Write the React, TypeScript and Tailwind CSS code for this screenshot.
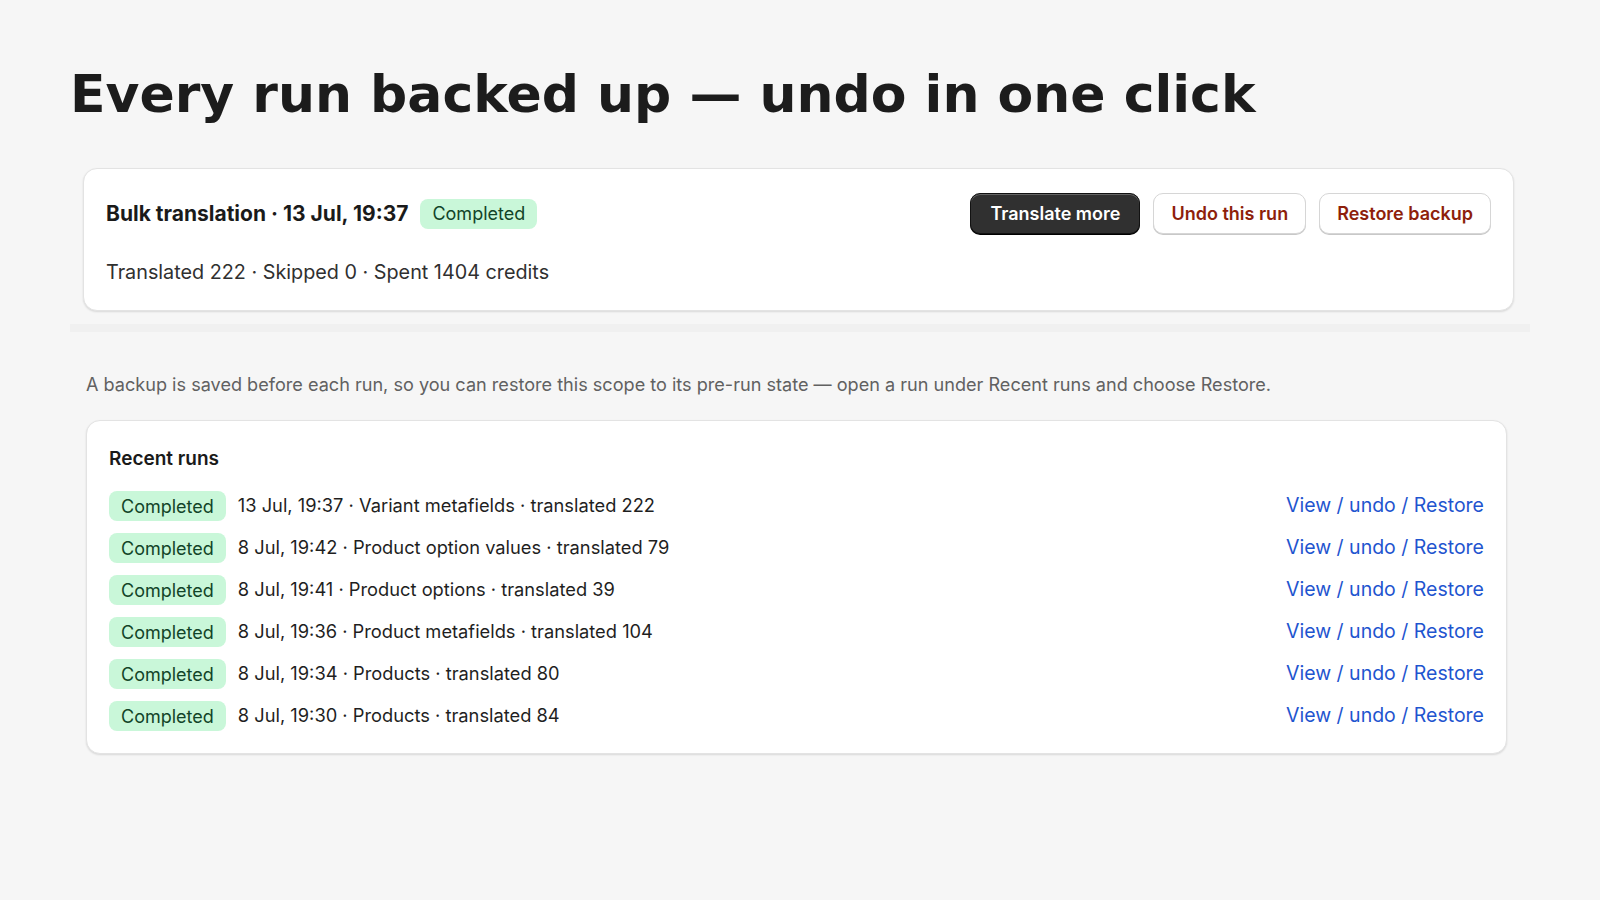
const runs = [
  { when: "13 Jul, 19:37", scope: "Variant metafields", count: 222 },
  { when: "8 Jul, 19:42", scope: "Product option values", count: 79 },
  { when: "8 Jul, 19:41", scope: "Product options", count: 39 },
  { when: "8 Jul, 19:36", scope: "Product metafields", count: 104 },
  { when: "8 Jul, 19:34", scope: "Products", count: 80 },
  { when: "8 Jul, 19:30", scope: "Products", count: 84 },
];

function Badge() {
  return (
    <span className="inline-flex h-[30px] items-center rounded-lg bg-[#c9f7d9] px-3 text-[18px] text-[#124428]">
      Completed
    </span>
  );
}

function OutlineButton({ children }: { children: React.ReactNode }) {
  return (
    <button
      type="button"
      className="h-[41px] rounded-[10px] border border-[#d6d6d6] bg-white px-[17px] text-[18px] font-semibold text-[#8e1f0b] shadow-[0_1px_0_#c8c8c8]"
    >
      {children}
    </button>
  );
}

export default function App() {
  return (
    <div className="min-h-[900px] bg-[#f6f6f6] px-[70px] pb-10 pt-[66px] font-['Inter','Noto_Sans',sans-serif] text-[#303030]">
      <h1 className="font-['DejaVu_Sans',sans-serif] text-[52px] font-bold leading-[56px] text-[#1c1c1c]">
        Every run backed up — undo in one click
      </h1>

      <section className="ml-[13px] mr-4 mt-[46px] rounded-[14px] border border-[#e3e3e3] bg-white px-[22px] py-6 shadow-[0_1px_2px_rgba(0,0,0,0.12)]">
        <div className="flex h-[41px] items-center">
          <h2 className="text-[21px] font-bold text-[#1a1a1a]">Bulk translation · 13 Jul, 19:37</h2>
          <span className="ml-3">
            <Badge />
          </span>
          <div className="ml-auto flex gap-[13px]">
            <button
              type="button"
              className="h-[41px] rounded-[10px] border border-[#121212] bg-[#303030] px-[19px] text-[18px] font-semibold text-white shadow-[inset_0_1px_0_rgba(255,255,255,0.25),0_1px_0_#000]"
            >
              Translate more
            </button>
            <OutlineButton>Undo this run</OutlineButton>
            <OutlineButton>Restore backup</OutlineButton>
          </div>
        </div>
        <p className="mt-[25px] text-[19.8px] leading-[27px]">Translated 222 · Skipped 0 · Spent 1404 credits</p>
      </section>

      <div className="mt-[13px] h-2 bg-[#f0f0f0]" />

      <p className="mx-4 mt-[40px] text-[18.1px] leading-6 text-[#616161]">
        A backup is saved before each run, so you can restore this scope to its pre-run state — open a run under Recent
        runs and choose Restore.
      </p>

      <section className="ml-4 mr-[23px] mt-6 rounded-[14px] border border-[#e3e3e3] bg-white px-[22px] pb-[22px] pt-[24px] shadow-[0_1px_2px_rgba(0,0,0,0.12)]">
        <h3 className="text-[19px] font-semibold leading-[28px] text-[#1a1a1a]">Recent runs</h3>
        <ul className="mt-[18px] flex flex-col gap-[12px]">
          {runs.map((r) => (
            <li key={r.when} className="flex items-center">
              <Badge />
              <span className="ml-3 text-[18.3px] text-[#1f1f1f]">
                {r.when} · {r.scope} · translated {r.count}
              </span>
              <a href="#" className="ml-auto text-[19.5px] text-[#1f55cf]">
                View / undo / Restore
              </a>
            </li>
          ))}
        </ul>
      </section>
    </div>
  );
}
